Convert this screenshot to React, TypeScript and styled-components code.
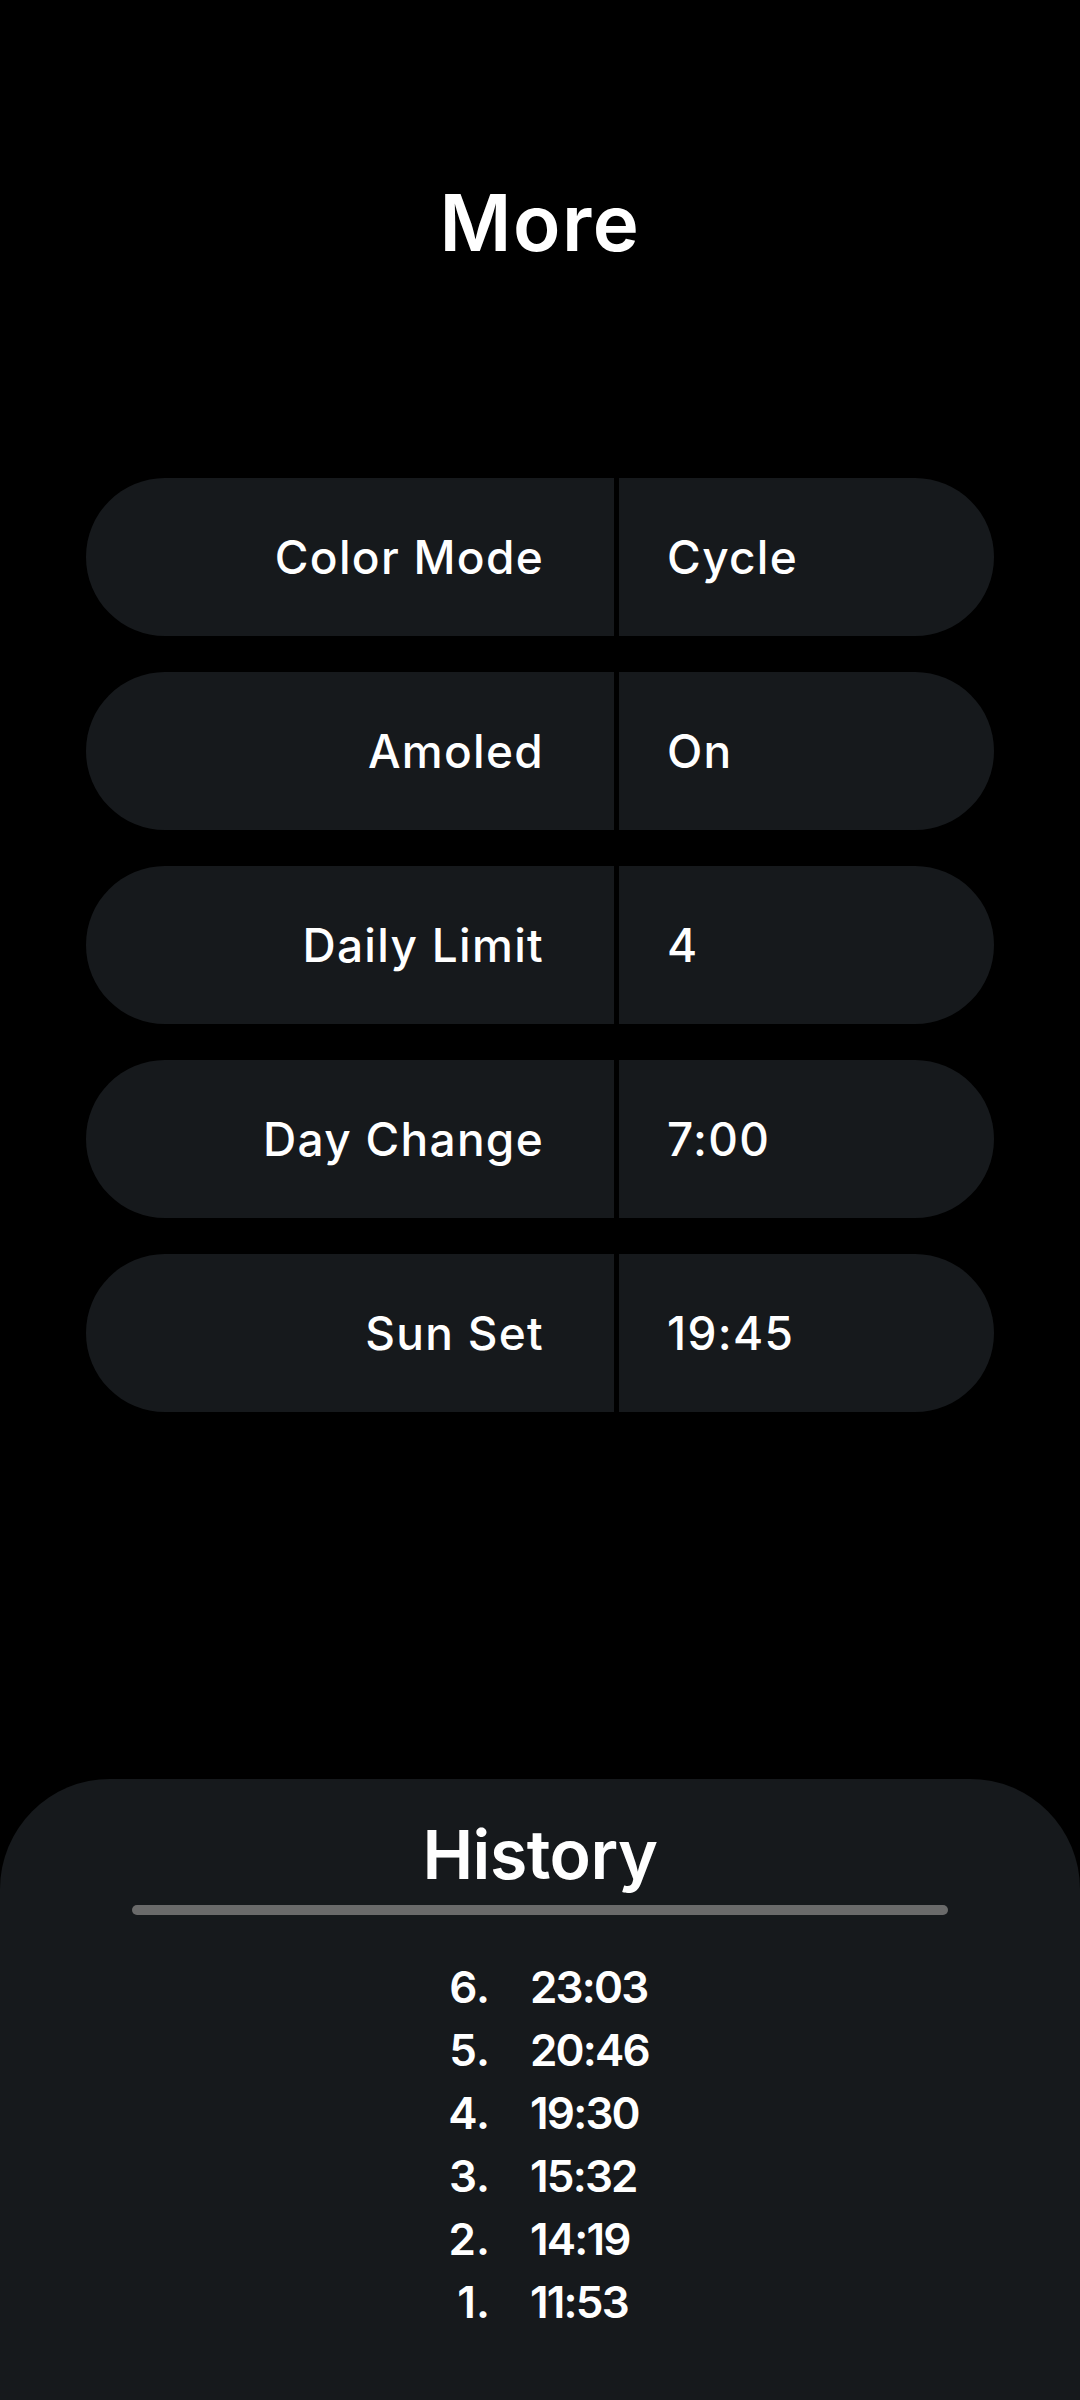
import React from "react";
import styled, { createGlobalStyle } from "styled-components";

const GlobalStyle = createGlobalStyle`
  html, body { margin: 0; padding: 0; background: #000; }
  body { font-family: Inter, "Noto Sans", "Liberation Sans", sans-serif; color: #fff; }
  * { box-sizing: border-box; }
`;

const Page = styled.div`
  min-height: 100vh;
  display: flex;
  flex-direction: column;
  background: #000;
`;

const Title = styled.h1`
  margin: 176px 0 0;
  font-size: 78px;
  line-height: 1.2;
  font-weight: 600;
  text-align: center;
  letter-spacing: 1.5px;
`;

const Settings = styled.div`
  margin-top: 208px;
  display: flex;
  flex-direction: column;
  align-items: center;
  gap: 36px;
`;

const Row = styled.div`
  width: 908px;
  height: 158px;
  display: flex;
  gap: 5px;
`;

const Cell = styled.div<{ $side: "label" | "value" }>`
  background: #16191c;
  display: flex;
  align-items: center;
  font-size: 46px;
  font-weight: 500;
  letter-spacing: 1.3px;
  ${(p) =>
    p.$side === "label"
      ? `
    flex: 0 0 528px;
    justify-content: flex-end;
    padding-right: 70px;
    border-radius: 79px 0 0 79px;
  `
      : `
    flex: 1;
    justify-content: flex-start;
    padding-left: 48px;
    border-radius: 0 79px 79px 0;
  `}
`;

const History = styled.section`
  margin-top: auto;
  height: 621px;
  background: #16191c;
  border-radius: 110px 110px 0 0;
  padding-top: 35px;
  display: flex;
  flex-direction: column;
  align-items: center;
`;

const HistoryTitle = styled.h2`
  margin: 0;
  font-size: 68px;
  line-height: 1.2;
  font-weight: 600;
  letter-spacing: -0.5px;
`;

const Bar = styled.div`
  margin-top: 9px;
  width: 816px;
  height: 10px;
  border-radius: 5px;
  background: #6a6a6a;
`;

const List = styled.div`
  margin-top: 41px;
  width: 100%;
  display: grid;
  grid-template-columns: 490px 1fr;
  column-gap: 40px;
  font-size: 44px;
  font-weight: 600;
  line-height: 63px;
`;

const Num = styled.span`
  justify-self: end;
`;

const Time = styled.span`
  justify-self: start;
  letter-spacing: -1.8px;
`;

const settings = [
  ["Color Mode", "Cycle"],
  ["Amoled", "On"],
  ["Daily Limit", "4"],
  ["Day Change", "7:00"],
  ["Sun Set", "19:45"],
];

const history = [
  [6, "23:03"],
  [5, "20:46"],
  [4, "19:30"],
  [3, "15:32"],
  [2, "14:19"],
  [1, "11:53"],
];

export default function App() {
  return (
    <Page>
      <GlobalStyle />
      <Title>More</Title>
      <Settings>
        {settings.map(([label, value]) => (
          <Row key={label}>
            <Cell $side="label">{label}</Cell>
            <Cell $side="value">{value}</Cell>
          </Row>
        ))}
      </Settings>
      <History>
        <HistoryTitle>History</HistoryTitle>
        <Bar />
        <List>
          {history.map(([n, t]) => (
            <React.Fragment key={n}>
              <Num>{n}.</Num>
              <Time>{t}</Time>
            </React.Fragment>
          ))}
        </List>
      </History>
    </Page>
  );
}
